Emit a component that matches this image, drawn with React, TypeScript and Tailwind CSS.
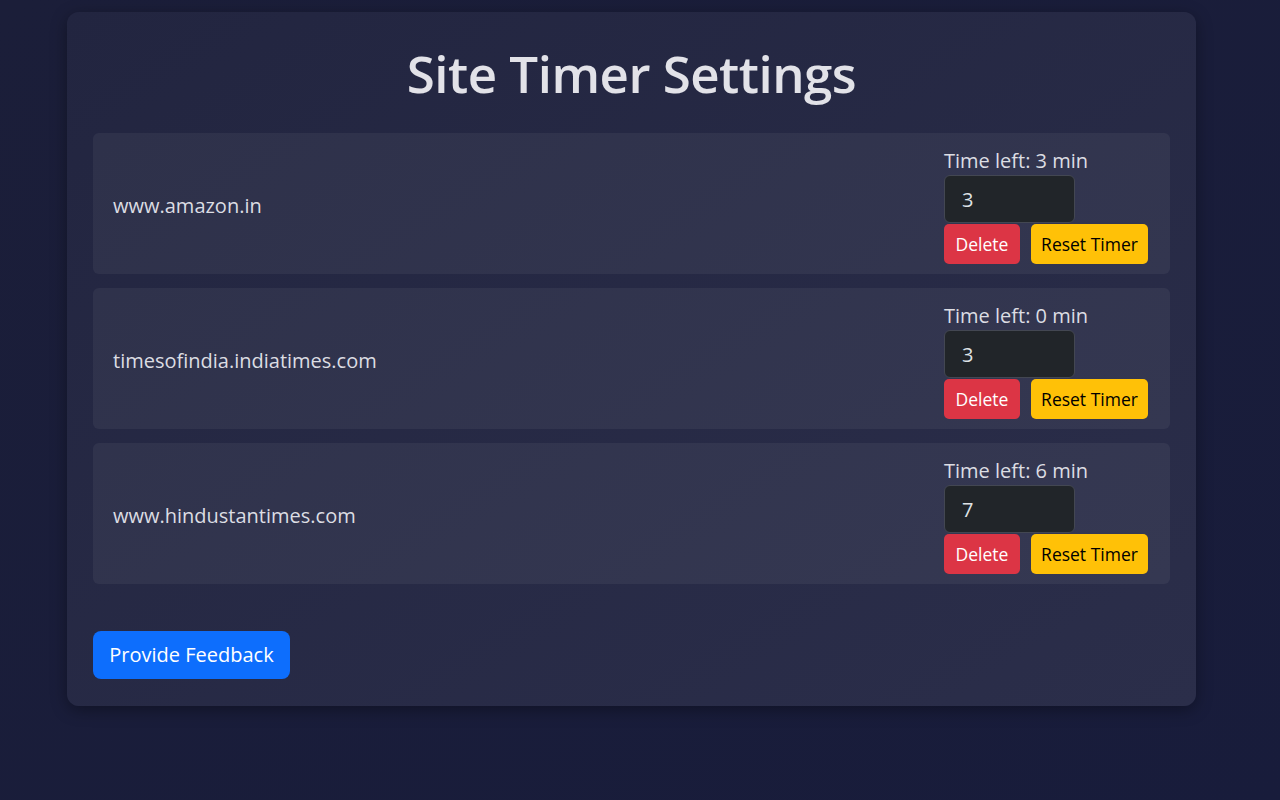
const sites = [
  { host: "www.amazon.in", left: 3, limit: 3 },
  { host: "timesofindia.indiatimes.com", left: 0, limit: 3 },
  { host: "www.hindustantimes.com", left: 6, limit: 7 },
];

export default function App() {
  return (
    <div
      className="min-h-[800px] w-full bg-gradient-to-br from-[#1b1e39] to-[#181c3b] pt-[12px] pl-[67px]"
      style={{ fontFamily: '"Open Sans", "Noto Sans", sans-serif' }}
    >
      <div className="w-[1129px] rounded-xl bg-gradient-to-br from-[#222540] to-[#2b2e4a] px-[26px] pt-[30px] pb-[27px] shadow-[0_4px_16px_rgba(0,0,0,0.35)]">
        <h1 className="mb-[29px] text-center text-[51px] leading-[62px] font-semibold tracking-[-0.5px] text-[#e2e2e8]">
          Site Timer Settings
        </h1>

        <div className="flex flex-col gap-[14px]">
          {sites.map((s) => (
            <div
              key={s.host}
              className="flex items-center justify-between rounded-md bg-white/[0.05] pr-[22px] pl-[20px] pt-[14px] pb-[10px]"
            >
              <span className="text-[20px] text-[#dcdde3]">{s.host}</span>
              <div className="flex w-[204px] flex-col">
                <span className="text-[20px] leading-[28px] text-[#dcdde3]">
                  Time left: {s.left} min
                </span>
                <input
                  type="number"
                  defaultValue={s.limit}
                  className="h-[48px] w-[131px] rounded-md border border-[#434752] bg-[#212529] px-[17px] text-[20px] text-[#dee2e6] outline-none [appearance:textfield]"
                />
                <div className="mt-[1px] flex gap-[11px]">
                  <button className="h-[40px] w-[76px] rounded-[5px] bg-[#dc3545] text-[17.5px] text-white">
                    Delete
                  </button>
                  <button className="h-[40px] w-[117px] rounded-[5px] bg-[#ffc107] text-[17.5px] text-black">
                    Reset Timer
                  </button>
                </div>
              </div>
            </div>
          ))}
        </div>

        <button className="mt-[47px] h-[48px] w-[197px] rounded-lg bg-[#0d6efd] text-[20px] text-white">
          Provide Feedback
        </button>
      </div>
    </div>
  );
}
